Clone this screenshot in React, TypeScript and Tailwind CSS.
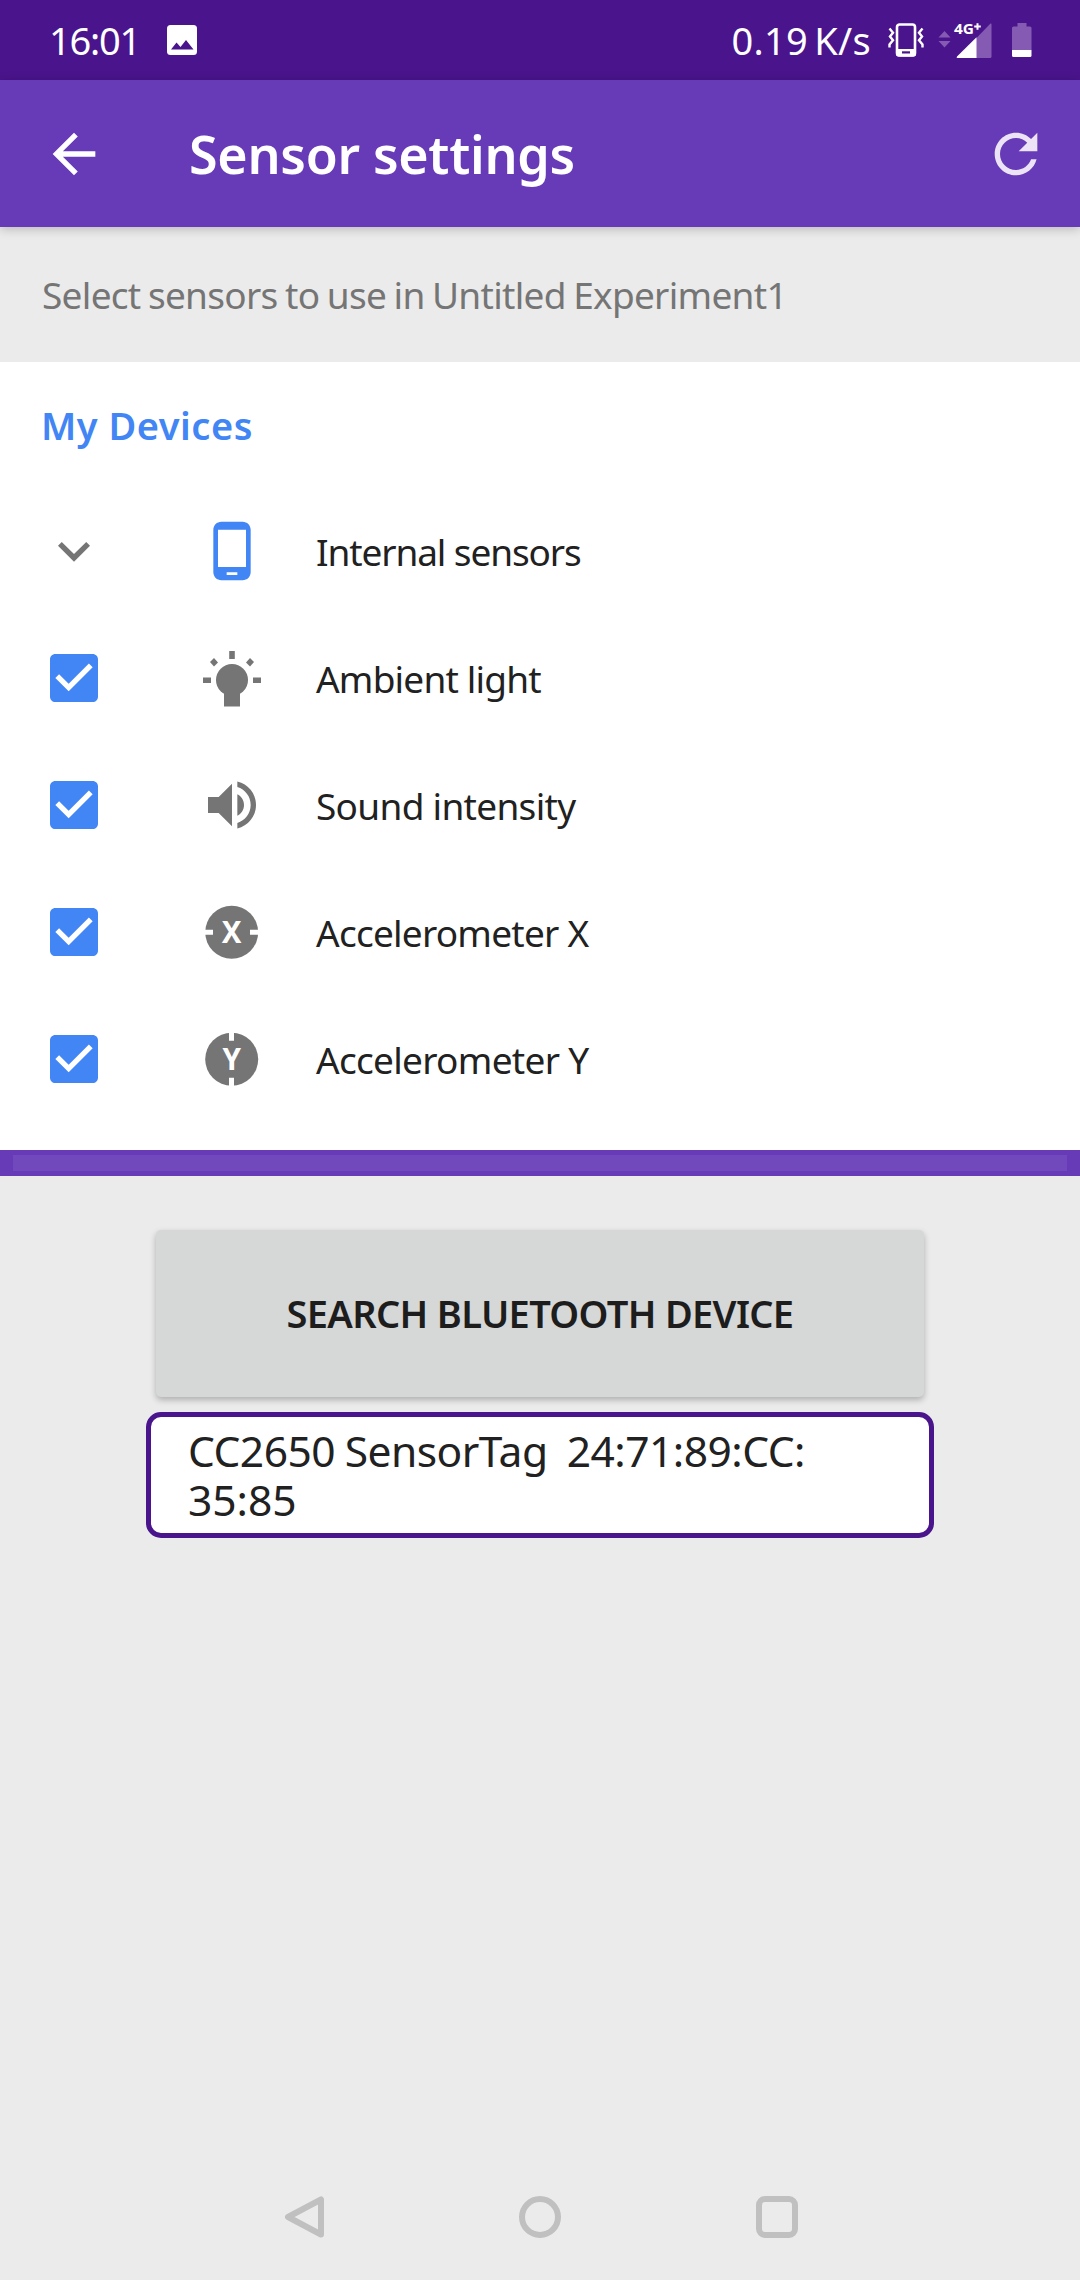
import type { ReactNode } from "react";

const materialPaths = {
  back: "M20 11H7.83l5.59-5.59L12 4l-8 8 8 8 1.41-1.41L7.83 13H20v-2z",
  refresh:
    "M17.65 6.35C16.2 4.9 14.21 4 12 4c-4.42 0-7.99 3.58-7.99 8s3.57 8 7.99 8c3.73 0 6.84-2.55 7.73-6h-2.08c-.82 2.33-3.04 4-5.65 4-3.31 0-6-2.69-6-6s2.69-6 6-6c1.66 0 3.14.69 4.22 1.78L13 11h7V4l-2.35 2.35z",
  chevron: "M16.59 8.59L12 13.17 7.41 8.59 6 10l6 6 6-6z",
  phone:
    "M16 1H8C6.34 1 5 2.34 5 4v16c0 1.66 1.34 3 3 3h8c1.66 0 3-1.34 3-3V4c0-1.66-1.34-3-3-3zm-2 20h-4v-1h4v1zm3.25-3H6.75V4h10.5v14z",
  volume:
    "M3 9v6h4l5 5V4L7 9H3zm13.5 3c0-1.77-1.02-3.29-2.5-4.03v8.05c1.48-.73 2.5-2.25 2.5-4.02zM14 3.23v2.06c2.89.86 5 3.54 5 6.71s-2.11 5.85-5 6.71v2.06c4.01-.91 7-4.49 7-8.77s-2.99-7.86-7-8.77z",
  check:
    "M19 3H5c-1.11 0-2 .9-2 2v14c0 1.1.89 2 2 2h14c1.11 0 2-.9 2-2V5c0-1.1-.89-2-2-2zm-9 14l-5-5 1.41-1.41L10 14.17l7.59-7.59L19 8l-9 9z",
};

function Material({ d, className }: { d: string; className: string }) {
  return (
    <svg viewBox="0 0 24 24" fill="currentColor" className={`shrink-0 ${className}`}>
      <path d={d} />
    </svg>
  );
}

function PhotoIcon() {
  return (
    <svg viewBox="0 0 30 30" className="ml-[31px] h-[30px] w-[30px]">
      <rect width="30" height="30" rx="3.5" fill="#fff" />
      <path d="M4 24.5L9.500 17.500L13.500 22L19 15L26.500 24.500Z" fill="#4a148c" />
    </svg>
  );
}

function VibrateIcon() {
  return (
    <svg viewBox="0 0 36 34" className="h-[34px] w-9" fill="none" stroke="#fff">
      <rect x="9" y="1.5" width="18" height="31" rx="2.5" strokeWidth="2.6" />
      <path d="M8 26h20v5q0 2.500-2.500 2.500h-15Q8 33.500 8 31Z" fill="#fff" stroke="none" />
      <rect x="14" y="28.3" width="8" height="2.2" fill="#4a148c" stroke="none" />
      <path
        d="M1.500 5.500L5 9.800L2 13.500L5 17.200L1.500 21.500V24.500M34.500 5.500L31 9.800L34 13.500L31 17.200L34.500 21.500V24.500"
        strokeWidth="2.4"
      />
    </svg>
  );
}

function SignalIcon() {
  return (
    <svg viewBox="0 0 54 36" className="ml-[14px] h-9 w-[54px] overflow-visible">
      <path d="M0.500 15.500L6.500 9L12.500 15.500ZM0.500 19H12.500L6.500 25.500Z" fill="#855ab3" />
      <path d="M38 16.500L52.500 1.500Q53.500 1 53.500 2.500V34.500Q53.500 36 52 36H38Z" fill="#855ab3" />
      <path d="M38.500 15.200V36H20Q18 36 19 34.500Z" fill="#fff" />
      <text
        x="16"
        y="12"
        fontFamily="Noto Sans, sans-serif"
        fontWeight="700"
        fontSize="15"
        fill="#fff"
        textLength="20"
        lengthAdjust="spacingAndGlyphs"
      >
        4G
      </text>
      <path d="M36.200 4.500H42.800M39.500 1.200V7.800" stroke="#fff" strokeWidth="2" />
    </svg>
  );
}

function BatteryIcon() {
  return (
    <svg viewBox="0 0 20 34" className="ml-5 h-[34px] w-5">
      <path d="M5.500 0H14.500V3.500H18Q19.500 3.500 19.500 5V27H0V5Q0 3.500 1.500 3.500H5.500Z" fill="#855ab3" />
      <path d="M0 27H19.500V32.500Q19.500 34 18 34H1.500Q0 34 0 32.500Z" fill="#fff" />
    </svg>
  );
}

function BulbIcon() {
  return (
    <svg viewBox="0 0 64 64" className="h-16 w-16" fill="#757575">
      <circle cx="32" cy="34" r="16" />
      <path d="M24 44H40V60.500H24Z" />
      <path d="M29.200 5H34.800V13H29.200ZM3 31.500H11V37H3ZM53 31.500H61V37H53Z" />
      <path d="M10 16L14 12L18 16.500L14 20.500ZM54 16L50 12L46 16.500L50 20.500Z" />
    </svg>
  );
}

function AxisIcon({ axis }: { axis: "X" | "Y" }) {
  return (
    <svg viewBox="0 0 64 64" className="h-16 w-16">
      <circle cx="31.7" cy="32.3" r="26.5" fill="#757575" />
      {axis === "X" ? (
        <path d="M4.500 29.800H13V34.800H4.500ZM50 29.800H59V34.800H50Z" fill="#fff" />
      ) : (
        <path d="M29 5V13.800H34V5ZM29 50.800V59.500H34V50.800Z" fill="#fff" />
      )}
      <text x="31.7" y="42.8" textAnchor="middle" fontFamily="Noto Sans, sans-serif" fontWeight="700" fontSize="29.5" fill="#fff">
        {axis}
      </text>
    </svg>
  );
}

function SensorRow({ control, icon, label, spacing }: { control?: ReactNode; icon: ReactNode; label: string; spacing: string }) {
  return (
    <li className="flex h-[127px] items-center pl-[42px]">
      <span className="mb-px h-16 w-16">{control ?? <Material d={materialPaths.check} className="h-16 w-16 text-[#4285f4]" />}</span>
      <span className="mb-px ml-[94px] h-16 w-16">{icon}</span>
      <span className={`ml-[52px] text-[37px] text-[#212121] ${spacing}`}>{label}</span>
    </li>
  );
}

export default function App() {
  return (
    <div className="flex h-[2280px] w-[1080px] flex-col overflow-hidden bg-[#ebebeb] font-['Noto_Sans',sans-serif] whitespace-nowrap">
      <div className="flex h-20 shrink-0 items-center bg-[#4a148c] pr-12 pl-[49px] text-[38px] text-white">
        <span className="w-[87px] tracking-[-1.2px]">16:01</span>
        <PhotoIcon />
        <span className="mr-[17px] ml-auto tracking-[0.3px] [word-spacing:-4px]">0.19 K/s</span>
        <VibrateIcon />
        <SignalIcon />
        <BatteryIcon />
      </div>

      <header className="z-10 flex h-[147px] shrink-0 items-center bg-[#673ab7] pr-8 pl-[42px] text-white shadow-[0_2px_10px_rgba(0,0,0,0.22)]">
        <Material d={materialPaths.back} className="h-16 w-16" />
        <h1 className="ml-[83px] text-[52px] font-semibold tracking-[-0.3px]">Sensor settings</h1>
        <Material d={materialPaths.refresh} className="ml-auto h-16 w-16 text-[#ece4f6]" />
      </header>

      <p className="flex h-[135px] shrink-0 items-center pl-[42px] text-[37px] tracking-[-0.7px] text-[#757575] [word-spacing:-1.5px]">
        Select sensors to use in Untitled Experiment1
      </p>

      <section className="h-[788px] shrink-0 bg-white">
        <h2 className="flex h-[126px] items-center pl-[41px] text-[38px] font-semibold tracking-[0.5px] text-[#4285f4]">My Devices</h2>
        <ul>
          <SensorRow
            control={<Material d={materialPaths.chevron} className="h-16 w-16 text-[#757575]" />}
            icon={<Material d={materialPaths.phone} className="h-16 w-16 text-[#4285f4]" />}
            label="Internal sensors"
            spacing="tracking-[-1.1px]"
          />
          <SensorRow icon={<BulbIcon />} label="Ambient light" spacing="tracking-[-0.8px]" />
          <SensorRow
            icon={<Material d={materialPaths.volume} className="h-16 w-16 text-[#757575]" />}
            label="Sound intensity"
            spacing="tracking-[-0.7px]"
          />
          <SensorRow icon={<AxisIcon axis="X" />} label="Accelerometer X" spacing="tracking-[-0.75px]" />
          <SensorRow icon={<AxisIcon axis="Y" />} label="Accelerometer Y" spacing="tracking-[-0.7px]" />
        </ul>
      </section>

      <div className="h-[26px] shrink-0 bg-[#673ab7] px-[13px] py-[5px]">
        <div className="h-4 bg-[#7149bc]" />
      </div>

      <main className="flex grow flex-col items-center pt-[54px]">
        <button className="h-[167px] w-[768px] rounded-[5px] bg-[#d6d7d7] text-[38px] font-semibold tracking-[-0.67px] text-[#1d1d1d] shadow-[0_3px_6px_rgba(0,0,0,0.26)]">
          SEARCH BLUETOOTH DEVICE
        </button>
        <div className="mt-[15px] h-[126px] w-[788px] rounded-[15px] border-[5px] border-[#4a148c] bg-white py-[9px] pl-[37px] text-[42.5px] leading-[49px] text-[#212121]">
          <div className="tracking-[-0.5px] [word-spacing:-1px]">CC2650 SensorTag&nbsp; 24:71:89:CC:</div>
          <div>35:85</div>
        </div>
      </main>

      <nav className="flex h-[126px] shrink-0 items-center justify-between pr-[282px] pl-[284px]">
        <svg viewBox="0 0 42 42" className="h-[42px] w-[42px]" fill="none" stroke="#c0c0c0" strokeWidth="6" strokeLinejoin="round">
          <path d="M37 3.500V38.500L4 21Z" />
        </svg>
        <div className="mr-[2px] h-[42px] w-[42px] rounded-full border-[6px] border-[#c0c0c0]" />
        <div className="h-[42px] w-[42px] rounded-[9px] border-[6px] border-[#c0c0c0]" />
      </nav>
    </div>
  );
}
